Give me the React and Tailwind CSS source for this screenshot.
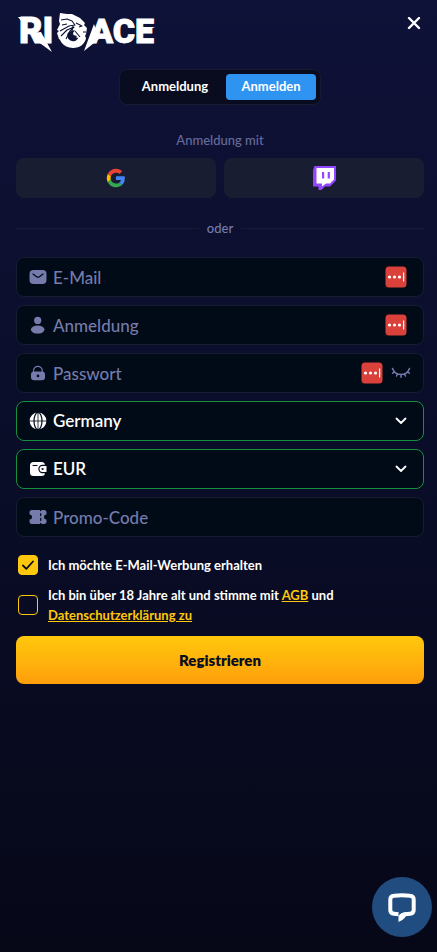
import { useState } from "react";

// -------------------------
// Logo
// -------------------------
function Logo() {
  return (
    <svg
      width="140"
      height="44"
      viewBox="18 10 140 44"
      fill="#fff"
      role="img"
      aria-label="RIOACE"
      className="block font-['Roboto',sans-serif] font-black"
    >
      <g stroke="#fff" strokeWidth="0.8">
        <text x="19" y="43" fontSize="36">RI</text>
        <text x="90" y="43" fontSize="34">ACE</text>
      </g>
      <path d="M18 17h10v5h-6z" />
      <path d="M30 33l11-1 11 20-15-11z" />
      <path d="M94 24l5 15-5 4-10 8z" />
      <path d="M142 27h13l-13 6z" />
      {/* lion head in a ring */}
      <path d="M59 30c-2 9 4 18 14 18 7 0 12-4 13-10l-7-2c-1 4-4 6-7 5-5-1-6-6-3-11z" />
      <path d="M60 13l7 1 5 0 8 4 2 2 3 3-1 2 3 3-1 6-1 2 1 2-3 3-4-3-5-1-1-4 2-3-4 1-5 3-5 6-2-1-2-6 2-2-2-1 2-4 1-2-1-3z" />
      <g fill="none" stroke="#0e1235" strokeWidth="1.1" strokeLinejoin="round">
        <path d="M61 20l6-1 5 2 3 4-6 1-9 5" />
        <path d="M62 25l5-1M61 36l6-6 7-3-4 4-4 8" />
        <path d="M76 23l6 3-3 1M72 31l1-5M75 31l5 6M83 32l3 0" />
      </g>
      <path d="M69 34l3-3 1 4 4 1-3 4c-3 0-5-2-5-6z" fill="#0e1235" />
    </svg>
  );
}

// -------------------------
// Icons
// -------------------------
const MailIcon = () => (
  <svg width="18" height="16" viewBox="0 0 18 16" aria-hidden="true">
    <rect x="0.5" y="1" width="17" height="14" rx="4" fill="currentColor" />
    <path d="M4 5l3.6 2.7a2.4 2.4 0 0 0 2.8 0L14 5" fill="none" stroke="#010a17" strokeWidth="1.2" strokeLinecap="round" />
  </svg>
);

const UserIcon = () => (
  <svg width="18" height="18" viewBox="0 0 18 18" fill="currentColor" aria-hidden="true">
    <circle cx="8.7" cy="4.4" r="3.6" />
    <ellipse cx="8.7" cy="13.6" rx="6.8" ry="4" />
  </svg>
);

const LockIcon = () => (
  <svg width="18" height="18" viewBox="0 0 18 18" aria-hidden="true">
    <path d="M4.5 9V6.7a4.4 4.4 0 0 1 8.8 0V9" fill="none" stroke="currentColor" strokeWidth="1.2" />
    <rect x="2" y="7.6" width="14" height="8.6" rx="3" fill="currentColor" />
    <circle cx="9" cy="11.9" r="1.3" fill="#010a17" />
  </svg>
);

const GlobeIcon = () => (
  <svg width="18" height="18" viewBox="0 0 18 18" aria-hidden="true">
    <circle cx="9" cy="9" r="8.4" fill="currentColor" />
    <g fill="none" stroke="#010a17" strokeWidth="1.2">
      <ellipse cx="9" cy="9" rx="4" ry="8.6" />
      <path d="M0 9h18M9 0v18" strokeWidth="0.8" />
    </g>
  </svg>
);

const WalletIcon = () => (
  <svg width="18" height="18" viewBox="0 0 18 18" aria-hidden="true">
    <rect x="1" y="2" width="15" height="14" rx="3.5" fill="currentColor" />
    <path d="M4 5.500h4" stroke="#010a17" strokeWidth="1.1" strokeLinecap="round" />
    <path d="M18 4.8h-4.500a4.200 4.200 0 0 0 0 8.400H18z" fill="#010a17" />
    <path d="M17.500 6h-4a3 3 0 0 0 0 6h4z" fill="currentColor" />
    <circle cx="13.6" cy="9" r="1.1" fill="#010a17" />
  </svg>
);

const TicketIcon = () => (
  <svg width="18" height="16" viewBox="0 0 18 16" aria-hidden="true">
    <path
      d="M3 1h7.700l1 1.500 1-1.500H15a2.500 2.500 0 0 1 2.500 2.500v2a2.500 2.500 0 0 0 0 5v2A2.500 2.500 0 0 1 15 15h-2.300l-1-1.500-1 1.500H3a2.500 2.500 0 0 1-2.500-2.500v-2a2.500 2.500 0 0 0 0-5v-2A2.500 2.500 0 0 1 3 1z"
      fill="currentColor"
    />
    <path d="M11.700 4.500v2.200M11.700 9.300v2.200" stroke="#010a17" strokeWidth="1.200" strokeLinecap="round" />
  </svg>
);

const GoogleIcon = () => (
  <svg width="22" height="22" viewBox="0 0 48 48" aria-hidden="true">
    <path fill="#EA4335" d="M24 12.3c3 0 5.600 1 7.700 3L37.500 9.500C34 6.200 29.400 4 24 4 16.200 4 9.400 8.500 6.100 15l6.700 5.200C14.400 15.600 18.800 12.300 24 12.300z" />
    <path fill="#4285F4" d="M43.200 24.500c0-1.400-.1-2.800-.4-4.100H24v8h10.800c-.5 2.500-1.900 4.600-4 6l6.500 5.100c3.800-3.500 5.900-8.700 5.900-15z" />
    <path fill="#FBBC05" d="M12.800 27.800a12 12 0 0 1 0-7.600L6.100 15a20 20 0 0 0 0 18z" />
    <path fill="#34A853" d="M24 44c5.400 0 9.900-1.800 13.300-4.800l-6.500-5c-1.800 1.200-4.100 1.900-6.800 1.900-5.200 0-9.600-3.500-11.200-8.200L6.100 33C9.400 39.500 16.200 44 24 44z" />
  </svg>
);

const TwitchIcon = () => (
  <svg width="24" height="24" viewBox="0 0 24 24" aria-hidden="true">
    <path fill="#9146ff" d="M2.500 0H24V14.500L18 20.500h-5L9.500 24H6.500v-3.500H1V4z" />
    <path fill="#fff" d="M4.500 2H22v11.500l-4 4h-4L10 20.500v-3H4.500z" />
    <path fill="#9146ff" d="M10 6h2.200v6.500H10zM15.700 6h2.200v6.500h-2.200z" />
  </svg>
);

const ChevronIcon = () => (
  <svg width="12" height="8" viewBox="0 0 12 8" aria-hidden="true">
    <path d="M1.500 1.500L6 6l4.500-4.500" fill="none" stroke="#fff" strokeWidth="1.800" strokeLinecap="round" strokeLinejoin="round" />
  </svg>
);

const ClosedEyeIcon = () => (
  <svg width="20" height="12" viewBox="0 0 20 12" aria-hidden="true">
    <path
      d="M1.500 1.500C3 5.500 6.300 7.500 10 7.500s7-2 8.500-6M3.700 4.800L1.600 6.200M6.600 6.900L5.500 9M10 7.500V10.300M13.400 6.900l1.100 2.100M16.300 4.800l2.100 1.400"
      fill="none"
      stroke="currentColor"
      strokeWidth="1.500"
      strokeLinecap="round"
    />
  </svg>
);

const KeyBadge = () => (
  <svg width="22" height="22" viewBox="0 0 22 22" className="shrink-0" aria-hidden="true">
    <rect x="0.5" y="0.5" width="21" height="21" rx="3.500" fill="#d9413a" />
    <g fill="#fff">
      <circle cx="4.500" cy="11" r="1.600" />
      <circle cx="9.500" cy="11" r="1.600" />
      <circle cx="14.500" cy="11" r="1.600" />
      <rect x="18" y="6.500" width="1.200" height="9" />
    </g>
  </svg>
);

// -------------------------
// Fields
// -------------------------
function TextField({ id, type = "text", label, icon, children }) {
  return (
    <div className="flex h-10 items-center rounded-lg border border-[#181c31] bg-[#010a17] pr-4 pl-3 text-[#757bab]">
      <label htmlFor={id} aria-label={label} className="flex w-6 shrink-0 items-center">
        {icon}
      </label>
      <input
        id={id}
        type={type}
        placeholder={label}
        className="h-full min-w-0 flex-1 bg-transparent text-[17px] font-medium text-white outline-none placeholder:text-[#757bab]"
      />
      {children}
    </div>
  );
}

function SelectField({ id, label, icon, options }) {
  return (
    <div className="relative flex h-10 items-center rounded-lg border border-[#16903f] bg-[#010a17] pl-3 text-white">
      <label htmlFor={id} aria-label={label} className="flex w-6 shrink-0 items-center">
        {icon}
      </label>
      <select
        id={id}
        className="h-full min-w-0 flex-1 appearance-none bg-transparent pr-10 text-[17px] font-semibold outline-none"
      >
        {options.map((option) => (
          <option key={option} className="bg-[#010a17]">{option}</option>
        ))}
      </select>
      <span className="pointer-events-none absolute right-4">
        <ChevronIcon />
      </span>
    </div>
  );
}

function Checkbox({ id, checked, onChange, children }) {
  return (
    <div className="flex items-center gap-2.5 px-0.5">
      <span className="grid size-5 shrink-0">
        <input
          id={id}
          type="checkbox"
          checked={checked}
          onChange={(e) => onChange(e.target.checked)}
          className="col-start-1 row-start-1 size-5 appearance-none rounded border border-[#ffc80c] checked:bg-[#ffc80c]"
        />
        {checked && (
          <svg viewBox="0 0 20 20" className="pointer-events-none col-start-1 row-start-1" aria-hidden="true">
            <path d="M5 10.500l3.300 3.300L15 6.500" fill="none" stroke="#0a0c20" strokeWidth="1.800" strokeLinecap="round" strokeLinejoin="round" />
          </svg>
        )}
      </span>
      <label htmlFor={id} className="text-[13px] leading-5 font-bold text-white">
        {children}
      </label>
    </div>
  );
}

export default function App() {
  const [tab, setTab] = useState("register");
  const [promo, setPromo] = useState(true);
  const [terms, setTerms] = useState(false);
  const [showPassword, setShowPassword] = useState(false);

  const tabClass = (name) =>
    name === tab ? "w-[90px] rounded bg-[#2f93f1]" : "flex-1";

  return (
    <div className="min-h-screen bg-linear-to-b from-[#0f1238] to-[#060818] pr-[13px] pl-4 font-['Lato',sans-serif] text-white">
      <header className="flex items-start justify-between pt-2.5">
        <a href="#home" className="ml-0.5">
          <Logo />
        </a>
        <button type="button" aria-label="Schließen" className="mt-1 grid size-5 place-items-center">
          <svg width="14" height="14" viewBox="0 0 14 14" aria-hidden="true">
            <path d="M2 1l10 10M12 1L2 11" stroke="#fff" strokeWidth="2.400" strokeLinecap="round" />
          </svg>
        </button>
      </header>

      <main>
        {/* Tabs */}
        <div className="mx-auto mt-[15px] flex h-9 w-[202px] rounded-lg border border-[#171a30] bg-[#090c1e] p-1 text-[13px] font-bold">
          <button type="button" onClick={() => setTab("login")} className={tabClass("login")}>
            Anmeldung
          </button>
          <button type="button" onClick={() => setTab("register")} className={tabClass("register")}>
            Anmelden
          </button>
        </div>

        {/* Social login */}
        <p className="mt-[25px] text-center text-[13px] leading-5 font-medium text-[#666c9c]">Anmeldung mit</p>
        <div className="mt-2 grid grid-cols-2 gap-2">
          <button type="button" aria-label="Google" className="grid h-10 place-items-center rounded-lg bg-[#191d32]">
            <GoogleIcon />
          </button>
          <button type="button" aria-label="Twitch" className="grid h-10 place-items-center rounded-lg bg-[#191d32]">
            <TwitchIcon />
          </button>
        </div>

        <div className="mt-5 flex items-center gap-2 text-[13px] leading-5 font-medium text-[#757bab]">
          <span className="h-px flex-1 bg-[#191c38]" />
          oder
          <span className="h-px flex-1 bg-[#191c38]" />
        </div>

        <form className="mt-[19px]" onSubmit={(e) => e.preventDefault()}>
          <div className="flex flex-col gap-2">
            <TextField id="email" type="email" label="E-Mail" icon={<MailIcon />}>
              <KeyBadge />
            </TextField>
            <TextField id="login" label="Anmeldung" icon={<UserIcon />}>
              <KeyBadge />
            </TextField>
            <TextField
              id="password"
              type={showPassword ? "text" : "password"}
              label="Passwort"
              icon={<LockIcon />}
            >
              <KeyBadge />
              <button
                type="button"
                aria-label="Passwort anzeigen"
                onClick={() => setShowPassword(!showPassword)}
                className="-mr-1 ml-2"
              >
                <ClosedEyeIcon />
              </button>
            </TextField>
            <SelectField id="country" label="Land" icon={<GlobeIcon />} options={["Germany", "Austria"]} />
            <SelectField id="currency" label="Währung" icon={<WalletIcon />} options={["EUR", "USD"]} />
            <TextField id="promo" label="Promo-Code" icon={<TicketIcon />} />
          </div>

          <div className="mt-[18px] flex flex-col gap-2.5">
            <Checkbox id="newsletter" checked={promo} onChange={setPromo}>
              Ich möchte E-Mail-Werbung erhalten
            </Checkbox>
            <Checkbox id="terms" checked={terms} onChange={setTerms}>
              Ich bin über 18 Jahre alt und stimme mit{" "}
              <a href="#agb" className="text-[#ffc80c] underline">AGB</a> und
              <br />
              <a href="#privacy" className="text-[#ffc80c] underline">Datenschutzerklärung zu</a>
            </Checkbox>
          </div>

          <button
            type="submit"
            className="mt-[11px] h-12 w-full rounded-lg bg-linear-to-b from-[#ffc80c] to-[#ff9e0c] text-[15px] font-extrabold text-[#0a0c20]"
          >
            Registrieren
          </button>
        </form>
      </main>

      {/* Chat */}
      <button
        type="button"
        aria-label="Chat"
        className="fixed right-[5px] bottom-[15px] grid size-[60px] place-items-center rounded-full bg-[#204c80]"
      >
        <svg width="28" height="30" viewBox="0 0 28 30" aria-hidden="true">
          <path
            d="M10.500 22.300L6 21.800Q2.300 21.400 2.300 18V7.500Q2.300 4 6 3.700Q14 2.800 22 3.700Q25.700 4 25.700 7.500V18Q25.700 21.400 22 21.800L17 22.300"
            fill="none"
            stroke="#fff"
            strokeWidth="4"
          />
          <path d="M10.500 20.300V30Q18 27.500 19 20.300H16Q13.500 20.500 10.500 23.500z" fill="#fff" />
        </svg>
      </button>
    </div>
  );
}
